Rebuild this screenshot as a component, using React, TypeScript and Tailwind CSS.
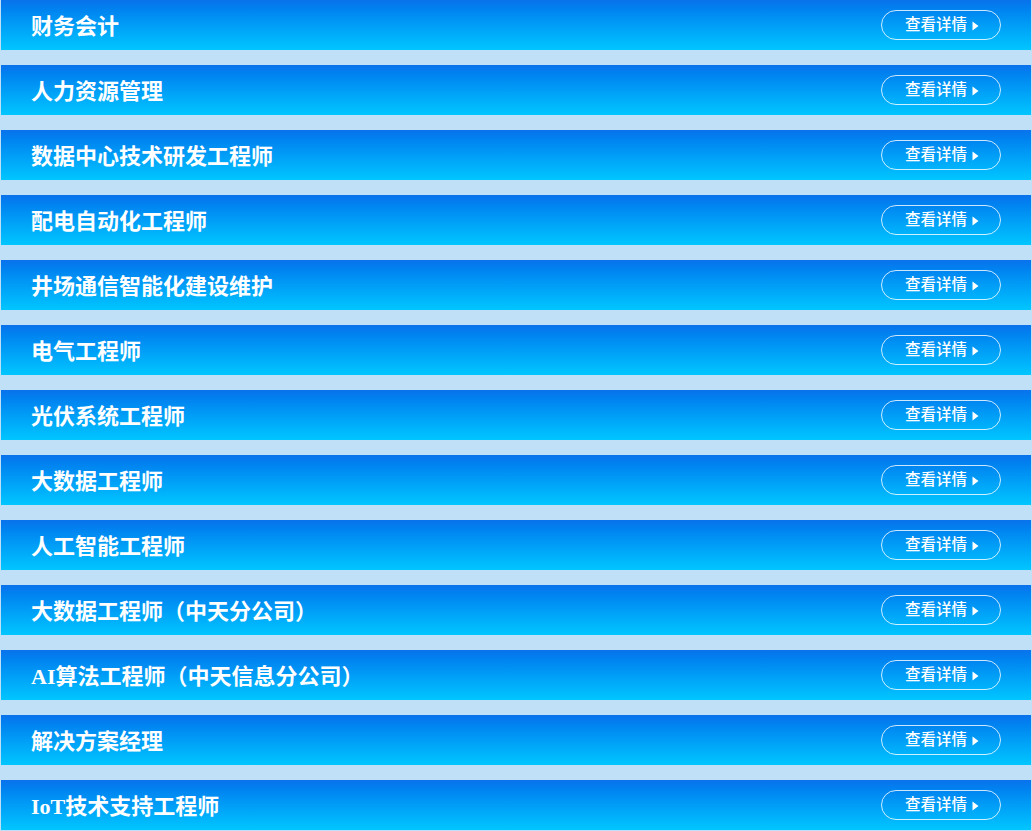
const jobs = [
  "财务会计",
  "人力资源管理",
  "数据中心技术研发工程师",
  "配电自动化工程师",
  "井场通信智能化建设维护",
  "电气工程师",
  "光伏系统工程师",
  "大数据工程师",
  "人工智能工程师",
  "大数据工程师（中天分公司）",
  "AI算法工程师（中天信息分公司）",
  "解决方案经理",
  "IoT技术支持工程师",
];

function JobRow({ title }: { title: string }) {
  return (
    <div className="flex h-[50px] items-center justify-between bg-gradient-to-b from-[#0a72ec] to-[#00c6ff] pl-[30px] pr-[30px]">
      <span className="pt-[4px] text-[22px] font-bold leading-none text-white">{title}</span>
      <button className="flex h-[30px] w-[120px] items-center justify-center gap-[5px] rounded-full border border-white/80 pb-px pl-[2px] text-[15.5px] font-medium leading-none text-white">
        <span>查看详情</span>
        <svg width="7" height="10" viewBox="0 0 7 10" className="mt-[2px]">
          <path d="M0.5 0.5 L6.5 5 L0.5 9.5 Z" fill="white" />
        </svg>
      </button>
    </div>
  );
}

export default function App() {
  return (
    <div
      className="flex min-h-screen flex-col gap-[15px] bg-[#bfe0f6] px-px"
      style={{ fontFamily: '"Liberation Serif", "Noto Sans CJK SC", serif' }}
    >
      {jobs.map((j, i) => (
        <JobRow key={i} title={j} />
      ))}
    </div>
  );
}
